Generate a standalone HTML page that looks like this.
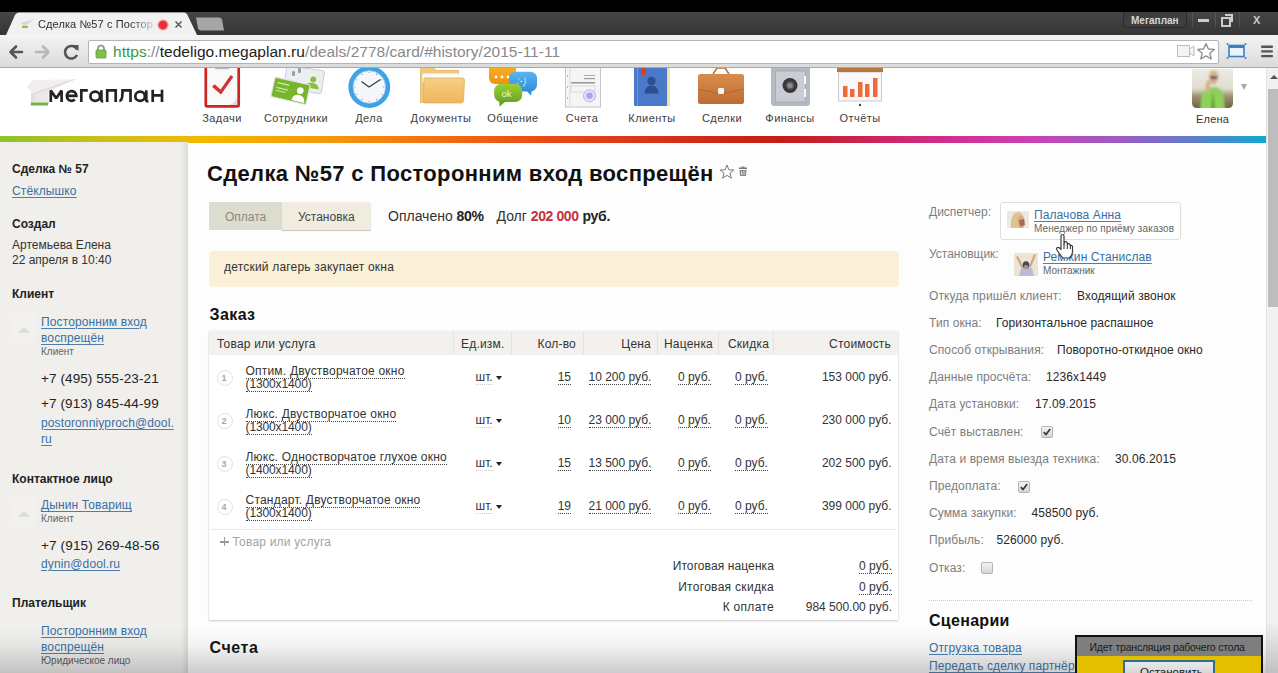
<!DOCTYPE html>
<html><head><meta charset="utf-8"><title>Megaplan</title>
<style>
html,body{margin:0;padding:0;width:1278px;height:673px;overflow:hidden;background:#fdfdfd;}
body{position:relative;font-family:"Liberation Sans",sans-serif;color:#333;}
.t{position:absolute;white-space:nowrap;line-height:1;}
.r{position:absolute;}
.a{letter-spacing:0.12px;color:#3870a4;text-decoration:underline;text-decoration-color:#4a7fb0;text-underline-offset:2px;}
.d{border-bottom:1px dotted #444;padding-bottom:0px;}
.g{color:#7d7d7d;}
.b{font-weight:bold;}
svg{position:absolute;overflow:visible;}
</style></head><body>
<div class="r" style="left:0px;top:0px;width:1278px;height:12px;background:#000"></div>
<div class="r" style="left:0px;top:12px;width:1278px;height:23px;background:linear-gradient(#464646,#353535)"></div>
<svg style="left:0;top:0" width="1278" height="68">
<path d="M6,35 L15,15 Q16.5,12.5 19,12.5 L184,12.5 Q186.5,12.5 187.5,15 L197,35 Z" fill="#f1f1f1"/>
<path d="M196,17.5 L219,17.5 Q221,17.5 222,19.5 L224,30.5 L201,30.5 Q199,30.5 198,28.5 Z" fill="#a6a6a6"/>
</svg>
<svg style="left:20px;top:18px" width="16" height="12">
<path d="M1,5 L14,1 L4,9 Z" fill="#d8d8d8"/><rect x="2" y="8" width="6" height="2" fill="#8cc63f"/></svg>
<div class="t " style="left:38px;top:18.5px;font-size:11px;color:#2f2f2f;letter-spacing:0.1px;-webkit-mask-image:linear-gradient(90deg,#000 80%,rgba(0,0,0,0.2));">Сделка №57 с Постор</div>
<div class="r" style="left:156.5px;top:18.5px;width:12px;height:12px;border-radius:50%;background:radial-gradient(circle,#e53038 0,#e53038 3.6px,#f27a7a 4.4px,#f7b5b5 5.4px,rgba(247,181,181,0) 6px)"></div>
<svg style="left:174px;top:20px" width="9" height="9"><path d="M1.5,1.5 L7.5,7.5 M7.5,1.5 L1.5,7.5" stroke="#5a5a5a" stroke-width="1.5"/></svg>
<div class="r" style="left:1123px;top:12px;width:62px;height:15px;background:#3e3e3e;border:1px solid #2b2b2b;border-top:none;border-radius:0 0 4px 4px"></div>
<div class="t " style="left:1131px;top:16px;font-size:10px;color:#d6d6d6;font-weight:bold">Мегаплан</div>
<div class="r" style="left:1192px;top:12px;width:1px;height:15px;background:#555"></div>
<div class="r" style="left:1198px;top:19px;width:11px;height:3px;background:#ccc"></div>
<div class="r" style="left:1215px;top:12px;width:1px;height:15px;background:#555"></div>
<div class="r" style="left:1221px;top:17px;width:6px;height:6px;border:2px solid #ccc"></div>
<div class="r" style="left:1225px;top:14px;width:6px;height:6px;border:2px solid #ccc;border-left:none;border-bottom:none"></div>
<div class="r" style="left:1239px;top:12px;width:1px;height:15px;background:#555"></div>
<div class="t " style="left:1253px;top:15px;font-size:11px;color:#ccc;font-weight:bold">X</div>
<div class="r" style="left:0px;top:35px;width:1278px;height:33px;background:linear-gradient(#f4f4f4,#dadada)"></div>
<div class="r" style="left:0px;top:67px;width:1278px;height:1px;background:#a8a8a8"></div>
<svg style="left:0;top:35px" width="90" height="32">
<path d="M22,17 L11,17 M16,11.5 L10.5,17 L16,22.5" stroke="#555" stroke-width="2.6" fill="none" stroke-linecap="round" stroke-linejoin="round"/>
<path d="M36,17 L48,17 M43,11.5 L48.5,17 L43,22.5" stroke="#b8b8b8" stroke-width="2.6" fill="none" stroke-linecap="round" stroke-linejoin="round"/>
<path d="M77,14.5 A6.3,6.3 0 1 0 77,20" stroke="#555" stroke-width="2.6" fill="none"/>
<path d="M72.5,10 L78.5,10 L78.5,16 Z" fill="#555"/>
</svg>
<div class="r" style="left:88px;top:39.5px;width:1129px;height:22.5px;background:#fff;border:1px solid #b4b4b4;border-radius:2px"></div>
<svg style="left:95px;top:44px" width="12" height="15">
<path d="M3,6 L3,4.5 A3,3 0 0 1 9,4.5 L9,6" stroke="#8a8a8a" stroke-width="1.6" fill="none"/>
<rect x="1" y="6" width="10" height="8" rx="1" fill="#7cc24a" stroke="#5d9a33" stroke-width="0.8"/></svg>
<div class="t " style="left:113px;top:43.5px;font-size:15.5px;letter-spacing:0.02px"><span style="color:#3a9a3a">https</span><span style="color:#888">://</span><span style="color:#222">tedeligo.megaplan.ru</span><span style="color:#888">/deals/2778/card/#history/2015-11-11</span></div>
<svg style="left:1170px;top:40px" width="108" height="24">
<rect x="7.5" y="5.5" width="12" height="11" fill="#f4f4f4" stroke="#bdbdbd" stroke-width="1"/>
<path d="M19.5,9 L24,6 L24,16 L19.5,13 Z" fill="#f4f4f4" stroke="#bdbdbd" stroke-width="1"/>
<path d="M36,3.5 L38.4,9 L44.3,9.4 L39.8,13.2 L41.2,19 L36,15.9 L30.8,19 L32.2,13.2 L27.7,9.4 L33.6,9 Z" fill="#fff" stroke="#8d8d8d" stroke-width="1.3" stroke-linejoin="round"/>
<rect x="59" y="5.5" width="15" height="11" fill="#eaf3fb" stroke="#3d7fc2" stroke-width="1.6"/>
<rect x="59" y="5" width="15" height="3" fill="#3d7fc2"/>
<circle cx="57.5" cy="4" r="1" fill="#3d7fc2"/><circle cx="75.5" cy="4" r="1" fill="#3d7fc2"/><circle cx="57.5" cy="18" r="1" fill="#3d7fc2"/><circle cx="75.5" cy="18" r="1" fill="#3d7fc2"/>
<rect x="91" y="5.5" width="12" height="2.4" rx="1" fill="#555"/><rect x="91" y="10.2" width="12" height="2.4" rx="1" fill="#555"/><rect x="91" y="14.9" width="12" height="2.4" rx="1" fill="#555"/>
</svg>
<div class="r" style="left:0px;top:68px;width:1266px;height:68px;background:#fff"></div>
<svg style="left:20px;top:72px" width="150" height="40">
<path d="M11,21 L54.8,7.3 L28.5,19.5 L28.5,30.5 L11,30.5 Z" fill="#ece8e8"/>
<path d="M11,21 L16,21 L14,30.5 L11,30.5 Z" fill="#e2dede"/>
<path d="M6.8,15.3 L13,7.9 L54.8,7.3 L14.1,21.5 Z" fill="#f2eeee"/>
<path d="M54.8,7.3 L14.1,21.5" stroke="#d6d2d2" stroke-width="0.9"/>
<path d="M11,30.5 L28.5,30.5 L28,33.5 L10.5,33.5 Z" fill="#72b44c"/>

</svg>
<svg style="left:0;top:0" width="170" height="110">
<g stroke="#232323" stroke-width="2.7" fill="none" stroke-linejoin="miter" stroke-miterlimit="1.6">
<path d="M50.8,102 L50.8,90.4 L56.2,98.2 L61.6,90.4 L61.6,102"/>
<path d="M66.8,95.8 L76.4,95.8 A4.8,4.9 0 1 0 74.8,99.6"/>
<path d="M81.3,102 L81.3,90.4 L87.8,90.4"/>
<ellipse cx="95.2" cy="96.2" rx="4.8" ry="4.6"/><path d="M101.4,90.2 L101.4,100 Q101.4,101.4 103.2,101.4"/>
<path d="M107.2,102 L107.2,90.4 L115.7,90.4 L115.7,102"/>
<path d="M119.3,101 Q122.4,100.6 122.5,93 L122.5,90.4 L130.5,90.4 L130.5,102"/>
<ellipse cx="140.1" cy="96.2" rx="4.8" ry="4.6"/><path d="M146.3,90.2 L146.3,100 Q146.3,101.4 148.4,101.4"/>
<path d="M152.7,89.8 L152.7,102 M152.7,95.3 L162,95.3 M162,89.8 L162,102"/>
</g></svg>
<svg style="left:0;top:68px;overflow:hidden" width="900" height="44">
<!-- zadachi -->
<rect x="206" y="-2" width="32" height="38" fill="#f9f9fa"/>
<rect x="215" y="0" width="14" height="1.2" fill="#b8b8b8"/>
<path d="M237.3,28 Q236,35.5 228,37.2 L237.3,37.2 Z" fill="#dcdcde"/>
<path d="M205.8,-2 L205.8,37 Q205.8,38.3 207.1,38.3 L237.4,38.3 Q238.7,38.3 238.7,37 L238.7,-2" stroke="#cf2424" stroke-width="2.7" fill="none"/>
<path d="M212,18.8 L214.6,16.2 L220.6,21.6 L230.7,7 L233.3,8.9 L221,26.4 Z" fill="#d63232"/>
<!-- sotrudniki -->
<g transform="rotate(9 304 12)">
<rect x="285" y="0" width="38" height="23" rx="2" fill="#eceef2" stroke="#c9cdd5" stroke-width="1"/>
<circle cx="313" cy="10" r="3" fill="#86c23a"/><path d="M306,19 Q307,13.5 313,13.5 Q319,13.5 320,19 Z" fill="#86c23a"/>
</g>
<rect x="292" y="3" width="3" height="5" rx="1" fill="#9a9ea6"/><rect x="298" y="0" width="3" height="5" rx="1" fill="#9a9ea6"/>
<g transform="rotate(13 290.5 22.8)">
<rect x="272.5" y="12.8" width="36" height="20" rx="1.5" fill="#78b52a" stroke="#dfe3e8" stroke-width="1.2"/>
<rect x="276" y="17" width="12" height="1.4" fill="#cfe8a8"/><rect x="276" y="22" width="12" height="1.4" fill="#cfe8a8"/><rect x="276" y="25" width="10" height="1.2" fill="#cfe8a8"/>
<circle cx="300" cy="20.5" r="3.3" fill="#fff"/><path d="M293.5,31.5 Q294,25 300,25 Q306,25 306.5,31.5 Z" fill="#fff"/>
</g>
<!-- dela clock -->
<circle cx="369.3" cy="19" r="18.6" fill="#f6f7fa" stroke="#3ea3e6" stroke-width="4.6"/><circle cx="369.3" cy="19" r="16.3" fill="none" stroke="#8cc8f0" stroke-width="0.8"/><circle cx="369.30" cy="33.50" r="0.6" fill="#888"/><circle cx="376.55" cy="31.56" r="0.6" fill="#888"/><circle cx="381.86" cy="26.25" r="0.6" fill="#888"/><circle cx="383.80" cy="19.00" r="0.6" fill="#888"/><circle cx="381.86" cy="11.75" r="0.6" fill="#888"/><circle cx="376.55" cy="6.44" r="0.6" fill="#888"/><circle cx="369.30" cy="4.50" r="0.6" fill="#888"/><circle cx="362.05" cy="6.44" r="0.6" fill="#888"/><circle cx="356.74" cy="11.75" r="0.6" fill="#888"/><circle cx="354.80" cy="19.00" r="0.6" fill="#888"/><circle cx="356.74" cy="26.25" r="0.6" fill="#888"/><circle cx="362.05" cy="31.56" r="0.6" fill="#888"/>
<path d="M361.5,13.5 L369,19 L380.5,11.5" stroke="#3a3a48" stroke-width="1.3" fill="none"/>
<!-- documenty folder -->
<defs>
<linearGradient id="fg1" x1="0" y1="0" x2="0" y2="1"><stop offset="0" stop-color="#f6cf86"/><stop offset="1" stop-color="#eeb55c"/></linearGradient>
<linearGradient id="gg1" x1="0" y1="0" x2="0" y2="1"><stop offset="0" stop-color="#9ccf34"/><stop offset="1" stop-color="#68a820"/></linearGradient>
<linearGradient id="og1" x1="0" y1="0" x2="0" y2="1"><stop offset="0" stop-color="#f8b52a"/><stop offset="1" stop-color="#ee9410"/></linearGradient>
<linearGradient id="bg1" x1="0" y1="0" x2="0" y2="1"><stop offset="0" stop-color="#5cb4f0"/><stop offset="1" stop-color="#2e8fdc"/></linearGradient>
</defs>
<path d="M420.5,-1 L433,-1 L436,2.5 L458.5,2.5 L458.5,34.5 L420.5,34.5 Z" fill="#f0c97c" stroke="#dcae5e" stroke-width="0.7"/>
<rect x="422.5" y="5.5" width="37" height="9" fill="#fafaf8"/>
<path d="M424,10 L462.5,10 Q464.5,10 464.5,12 L463.5,33 Q463.3,35 461.3,35 L425,35 Q423.5,35 423.5,33.5 Z" fill="url(#fg1)" stroke="#dcaa58" stroke-width="0.7"/>
<!-- obschenie bubbles -->
<rect x="489" y="-6" width="27" height="22" rx="6" fill="url(#og1)"/>
<circle cx="496" cy="9" r="1.4" fill="#fff"/><circle cx="502" cy="9" r="1.4" fill="#fff"/><circle cx="508" cy="9" r="1.4" fill="#fff"/>
<rect x="509" y="3.7" width="28" height="19.7" rx="6.5" fill="url(#bg1)"/>
<path d="M526,22 L531,27.8 L532,21 Z" fill="#2e8fdc"/>
<text x="517" y="16.5" font-size="10" fill="#cfeaff" font-family="Liberation Sans" transform="rotate(12 523 13)">:-)</text>
<rect x="494.2" y="15.7" width="28" height="18.3" rx="7" fill="url(#gg1)"/>
<path d="M499,32 L499.5,38.7 L506,33 Z" fill="#68a820"/>
<text x="501.5" y="28.5" font-size="9.5" fill="#eef8df" font-family="Liberation Sans">ok</text>
<!-- scheta invoice -->
<rect x="565.5" y="-3" width="35" height="42" fill="#f5f5f8" stroke="#c4c6cc" stroke-width="1"/>
<rect x="569.5" y="-3" width="0.8" height="42" fill="#d4d4da"/>
<rect x="567" y="7" width="0.8" height="2" fill="#aaa"/><rect x="567" y="18" width="0.8" height="2" fill="#aaa"/><rect x="567" y="29" width="0.8" height="2" fill="#aaa"/>
<rect x="584" y="7" width="11" height="1" fill="#a8a8a8"/><rect x="584" y="10" width="11" height="1.2" fill="#999"/>
<rect x="571" y="14.3" width="24" height="1.1" fill="#707070"/>
<rect x="571" y="18" width="24" height="6" fill="none" stroke="#cfcfd4" stroke-width="0.7"/>
<circle cx="589.5" cy="27.8" r="6" fill="#e8e0f8" stroke="#b9a2ea" stroke-width="0.9"/><circle cx="589.5" cy="27.8" r="3.3" fill="#b79cf0"/>
<!-- klienty notebook -->
<rect x="634" y="-3" width="34" height="41" rx="1" fill="#4b79c9"/>
<rect x="667" y="-3" width="3" height="41" fill="#f2e2a0"/>
<rect x="637" y="-3" width="1" height="41" fill="#6d95da"/>
<rect x="641" y="-2" width="5" height="9" fill="#e03c2a"/>
<circle cx="651.5" cy="13" r="4.2" fill="#2c4f8e"/>
<path d="M644.5,25.5 Q645,17.5 651.5,17.5 Q658,17.5 658.5,25.5 Z" fill="#2c4f8e"/>
<!-- sdelki briefcase -->
<path d="M713,6 L717,0 L725,0 L729,6" stroke="#b8743e" stroke-width="1.6" fill="none"/>
<defs><linearGradient id="bc1" x1="0" y1="0" x2="0" y2="1"><stop offset="0" stop-color="#d98c4c"/><stop offset="1" stop-color="#bf6c34"/></linearGradient></defs><rect x="698" y="6" width="46" height="30" rx="2.5" fill="url(#bc1)"/>
<path d="M698,21 L721,26 L744,21" stroke="#a86230" stroke-width="0.8" fill="none"/>
<rect x="718" y="20" width="6" height="6" rx="1" fill="#f4f4f4"/>
<!-- finansy safe -->
<rect x="771" y="-3" width="39" height="41" rx="3" fill="#b5b9c1"/>
<rect x="775.5" y="3" width="30" height="31" fill="#c9cdd3" stroke="#a4a8b0" stroke-width="0.8"/>
<rect x="804" y="8" width="2" height="8" fill="#f6f6f6"/><rect x="804" y="21" width="2" height="8" fill="#f6f6f6"/>
<circle cx="790" cy="17.5" r="7.5" fill="#38383a"/><circle cx="790" cy="17.5" r="4.2" fill="#5a5a5c"/><circle cx="790" cy="17.5" r="2.6" fill="#8a8a8c"/>
<!-- otchety board -->
<rect x="838.5" y="4" width="43" height="29" fill="#fbf9fb" stroke="#c8c8cc" stroke-width="1"/>
<rect x="837" y="-1" width="46" height="5" fill="#b9773e"/>
<rect x="843" y="18" width="4.5" height="11" fill="#f26a36"/>
<rect x="850" y="21" width="4.5" height="8" fill="#f26a36"/>
<rect x="858" y="14" width="4.5" height="15" fill="#f26a36"/>
<rect x="865" y="16" width="4.5" height="13" fill="#f26a36"/>
<rect x="873" y="10" width="4.5" height="19" fill="#f26a36"/>
<circle cx="860" cy="37" r="1.2" fill="#444"/>
</svg>
<div class="t" style="left:172px;width:100px;text-align:center;top:113px;font-size:11px;color:#404040;letter-spacing:0.45px">Задачи</div>
<div class="t" style="left:246px;width:100px;text-align:center;top:113px;font-size:11px;color:#404040;letter-spacing:0.45px">Сотрудники</div>
<div class="t" style="left:319px;width:100px;text-align:center;top:113px;font-size:11px;color:#404040;letter-spacing:0.45px">Дела</div>
<div class="t" style="left:391px;width:100px;text-align:center;top:113px;font-size:11px;color:#404040;letter-spacing:0.45px">Документы</div>
<div class="t" style="left:463px;width:100px;text-align:center;top:113px;font-size:11px;color:#404040;letter-spacing:0.45px">Общение</div>
<div class="t" style="left:532px;width:100px;text-align:center;top:113px;font-size:11px;color:#404040;letter-spacing:0.45px">Счета</div>
<div class="t" style="left:602px;width:100px;text-align:center;top:113px;font-size:11px;color:#404040;letter-spacing:0.45px">Клиенты</div>
<div class="t" style="left:672px;width:100px;text-align:center;top:113px;font-size:11px;color:#404040;letter-spacing:0.45px">Сделки</div>
<div class="t" style="left:740px;width:100px;text-align:center;top:113px;font-size:11px;color:#404040;letter-spacing:0.45px">Финансы</div>
<div class="t" style="left:810px;width:100px;text-align:center;top:113px;font-size:11px;color:#404040;letter-spacing:0.45px">Отчёты</div>
<svg style="left:1192px;top:69px" width="42" height="40">
<defs><clipPath id="av"><path d="M0,0 L41,0 L41,34 Q41,39 36,39 L5,39 Q0,39 0,34 Z"/></clipPath>
<filter id="bl3"><feGaussianBlur stdDeviation="0.8"/></filter>
<linearGradient id="sky" x1="0" y1="0" x2="0" y2="1"><stop offset="0" stop-color="#ecebe6"/><stop offset="0.5" stop-color="#e0dccd"/><stop offset="0.65" stop-color="#a09370"/><stop offset="1" stop-color="#62583f"/></linearGradient></defs>
<g clip-path="url(#av)"><g filter="url(#bl3)">
<rect x="-2" y="-2" width="46" height="44" fill="url(#sky)"/>
<path d="M8,42 L10,24 Q14,18 21,18 Q28,18 31,23 L33,42 Z" fill="#8fd05a"/>
<path d="M19,42 L21,22 L23,42 Z" fill="#5a9a38"/>
<path d="M14,23 Q13,15 15.5,11 L18.5,12.5 L17.5,24 Z" fill="#d6b08a"/>
<ellipse cx="21.5" cy="9.5" rx="4" ry="5.5" fill="#d4ac88"/>
<path d="M17,9 Q16.5,1.5 21.5,1.5 Q27,1.5 26.5,9 L25,5 Q21.5,3 18.5,5 Z" fill="#cdb070"/>
<rect x="18" y="7.5" width="7.5" height="2.2" fill="#3a3430"/>
</g></g></svg>
<div class="r" style="left:1241px;top:84px;width:0;height:0;border-left:3.5px solid transparent;border-right:3.5px solid transparent;border-top:6px solid #a8a8a8"></div>
<div class="t " style="left:1196px;top:114px;font-size:11px;color:#333;letter-spacing:0.2px">Елена</div>
<div class="r" style="left:0px;top:136px;width:1266px;height:6.5px;background:linear-gradient(90deg,#8cc22a 0px,#c8c018 100px,#f4b800 200px,#f49a0c 320px,#f47c10 400px,#ee5014 520px,#d83418 650px,#c21e14 780px,#cc2250 860px,#d22e90 950px,#cc40b4 1030px,#9a5cc4 1120px,#5a80cc 1200px,#10a8d0 1266px)"></div>
<div class="r" style="left:1266px;top:68px;width:12px;height:605px;background:#f0f0f0;border-left:1px solid #e4e4e4"></div>
<div class="r" style="left:1270px;top:75px;width:0;height:0;border-left:4px solid transparent;border-right:4px solid transparent;border-bottom:4px solid #505050"></div>
<div class="r" style="left:1268px;top:89px;width:10px;height:218px;background:#bdbdbd"></div>
<div class="r" style="left:0px;top:142px;width:188px;height:531px;background:#f0efec;box-shadow:inset -6px 0 6px -4px #d2d0cb"></div>
<div class="r" style="left:187px;top:142px;width:1px;height:531px;background:#dedcd8"></div>
<div class="t " style="left:12px;top:163px;font-size:12px;color:#222;font-weight:bold">Сделка № 57</div>
<div class="t a" style="left:12px;top:185px;font-size:12px;">Стёклышко</div>
<div class="t " style="left:12px;top:218px;font-size:12px;color:#222;font-weight:bold">Создал</div>
<div class="t " style="left:12px;top:239px;font-size:12px;color:#333">Артемьева Елена</div>
<div class="t " style="left:12px;top:253.5px;font-size:12px;color:#333">22 апреля в 10:40</div>
<div class="t " style="left:12px;top:288px;font-size:12px;color:#222;font-weight:bold">Клиент</div>
<div class="r" style="left:10px;top:313px;width:25px;height:29px;background:#f2f1ee"></div>
<div class="r" style="left:18px;top:327px;width:0;height:0;border-left:6.5px solid transparent;border-right:6.5px solid transparent;border-bottom:6px solid #dedede"></div>
<div class="t a" style="left:41px;top:315.5px;font-size:12px;">Посторонним вход</div>
<div class="t a" style="left:41px;top:332px;font-size:12px;">воспрещён</div>
<div class="t " style="left:41px;top:347px;font-size:10px;color:#666">Клиент</div>
<div class="t " style="left:41px;top:371.5px;font-size:13.5px;color:#222;letter-spacing:0.1px">+7 (495) 555-23-21</div>
<div class="t " style="left:41px;top:397px;font-size:13.5px;color:#222;letter-spacing:0.1px">+7 (913) 845-44-99</div>
<div class="t a" style="left:41px;top:416.5px;font-size:12px;">postoronniyproch@dool.</div>
<div class="t a" style="left:41px;top:433px;font-size:12px;">ru</div>
<div class="t " style="left:12px;top:472.5px;font-size:12px;color:#222;font-weight:bold">Контактное лицо</div>
<div class="r" style="left:10px;top:497px;width:25px;height:29px;background:#f2f1ee"></div>
<div class="r" style="left:18px;top:511px;width:0;height:0;border-left:6.5px solid transparent;border-right:6.5px solid transparent;border-bottom:6px solid #dedede"></div>
<div class="t a" style="left:41px;top:499px;font-size:12px;">Дынин Товарищ</div>
<div class="t " style="left:41px;top:514px;font-size:10px;color:#666">Клиент</div>
<div class="t " style="left:41px;top:538.5px;font-size:13.5px;color:#222;letter-spacing:0.15px">+7 (915) 269-48-56</div>
<div class="t a" style="left:41px;top:557.5px;font-size:12px;">dynin@dool.ru</div>
<div class="t " style="left:12px;top:596.5px;font-size:12px;color:#222;font-weight:bold">Плательщик</div>
<div class="t a" style="left:41px;top:624.5px;font-size:12px;">Посторонним вход</div>
<div class="t a" style="left:41px;top:641px;font-size:12px;">воспрещён</div>
<div class="t " style="left:41px;top:655.5px;font-size:10px;color:#555">Юридическое лицо</div>
<div class="t " style="left:207px;top:162.5px;font-size:22px;color:#111;font-weight:bold;letter-spacing:0.34px">Сделка №57 с Посторонним вход воспрещён</div>
<svg style="left:719px;top:164px" width="30" height="16">
<path d="M8,1 L9.9,5.8 L14.8,6 L11,9.2 L12.3,14.2 L8,11.4 L3.7,14.2 L5,9.2 L1.2,6 L6.1,5.8 Z" fill="#fff" stroke="#777" stroke-width="1" stroke-linejoin="round"/>
<rect x="20" y="3.5" width="8" height="1.5" fill="#777"/><rect x="22.5" y="2.5" width="3" height="1.2" fill="#777"/>
<path d="M20.5,6 L27.5,6 L27,12 L21,12 Z" fill="#888"/>
<rect x="22.3" y="7" width="0.8" height="4" fill="#fff"/><rect x="24.6" y="7" width="0.8" height="4" fill="#fff"/>
</svg>
<div class="r" style="left:209px;top:202px;width:73px;height:28px;background:#dcdccf"></div>
<div class="r" style="left:282px;top:202px;width:89px;height:28px;background:#f1ece0;box-shadow:0 1px 1px #c9c5b8;border-radius:0 2px 2px 0"></div>
<div class="t " style="left:225px;top:210.5px;font-size:12px;color:#8a8a84">Оплата</div>
<div class="t " style="left:298px;top:210.5px;font-size:12px;color:#444">Установка</div>
<div class="t " style="left:388px;top:209px;font-size:14px;color:#333">Оплачено <b style="color:#222;letter-spacing:-0.4px">80%</b></div>
<div class="t " style="left:496.5px;top:209px;font-size:14px;color:#333">Долг <b style="color:#c4313c;letter-spacing:-0.4px">202 000</b> <b style="color:#222;letter-spacing:-0.3px">руб.</b></div>
<div class="r" style="left:209px;top:251px;width:690px;height:36px;background:#faf0d7;border-radius:4px"></div>
<div class="t " style="left:224px;top:261px;font-size:12px;color:#333;letter-spacing:0.2px">детский лагерь закупает окна</div>
<div class="t " style="left:209.5px;top:306.5px;font-size:16px;color:#111;font-weight:bold;letter-spacing:0.4px">Заказ</div>
<div class="r" style="left:209px;top:331px;width:689px;height:289px;background:#fff;box-shadow:0 1px 2px rgba(0,0,0,0.18), 0 0 1px rgba(0,0,0,0.12)"></div>
<div class="r" style="left:209px;top:331px;width:689px;height:24px;background:#f2f1ed"></div>
<div class="r" style="left:453px;top:331px;width:1px;height:24px;background:#e4e3dc"></div>
<div class="r" style="left:511px;top:331px;width:1px;height:24px;background:#e4e3dc"></div>
<div class="r" style="left:583px;top:331px;width:1px;height:24px;background:#e4e3dc"></div>
<div class="r" style="left:657px;top:331px;width:1px;height:24px;background:#e4e3dc"></div>
<div class="r" style="left:718px;top:331px;width:1px;height:24px;background:#e4e3dc"></div>
<div class="r" style="left:773px;top:331px;width:1px;height:24px;background:#e4e3dc"></div>
<div class="t " style="left:217px;top:337.5px;font-size:12px;color:#333;letter-spacing:0.2px">Товар или услуга</div>
<div class="t " style="left:461px;top:337.5px;font-size:12px;color:#333;letter-spacing:0.2px">Ед.изм.</div>
<div class="t " style="right:702px;top:337.5px;font-size:12px;color:#333;letter-spacing:0.2px">Кол-во</div>
<div class="t " style="right:627px;top:337.5px;font-size:12px;color:#333;letter-spacing:0.2px">Цена</div>
<div class="t " style="left:664px;top:337.5px;font-size:12px;color:#333;letter-spacing:0.2px">Наценка</div>
<div class="t " style="left:728px;top:337.5px;font-size:12px;color:#333;letter-spacing:0.2px">Скидка</div>
<div class="t " style="right:387px;top:337.5px;font-size:12px;color:#333;letter-spacing:0.2px">Стоимость</div>
<div class="r" style="left:217px;top:369.5px;width:14px;height:14px;border:1px solid #e2e2e2;border-radius:50%;background:#fff"></div>
<div class="t " style="left:221.5px;top:374.0px;font-size:9px;color:#a8a8a8;font-weight:bold">1</div>
<div class="t " style="left:245.5px;top:364.5px;font-size:12px;color:#333;letter-spacing:0.21px"><span class="d">Оптим. Двустворчатое окно</span></div>
<div class="t " style="left:245.5px;top:378.0px;font-size:12px;color:#333;letter-spacing:-0.12px"><span class="d">(1300x1400)</span></div>
<div class="t " style="left:475.5px;top:371.0px;font-size:12px;color:#333"><span class="d" style="border-color:#ccc">шт.</span></div>
<div class="r" style="left:496px;top:376.0px;width:0;height:0;border-left:3.5px solid transparent;border-right:3.5px solid transparent;border-top:4px solid #222"></div>
<div class="t " style="right:707px;top:371.0px;font-size:12px;color:#333"><span class="d">15</span></div>
<div class="t " style="left:588.5px;top:371.0px;font-size:12px;color:#333"><span class="d">10 200 руб.</span></div>
<div class="t " style="left:678px;top:371.0px;font-size:12px;color:#333"><span class="d">0 руб.</span></div>
<div class="t " style="left:735px;top:371.0px;font-size:12px;color:#333"><span class="d">0 руб.</span></div>
<div class="t " style="right:386.5px;top:371.0px;font-size:12px;color:#333">153 000 руб.</div>
<div class="r" style="left:217px;top:412.5px;width:14px;height:14px;border:1px solid #e2e2e2;border-radius:50%;background:#fff"></div>
<div class="t " style="left:221.5px;top:417.0px;font-size:9px;color:#a8a8a8;font-weight:bold">2</div>
<div class="t " style="left:245.5px;top:407.5px;font-size:12px;color:#333;letter-spacing:0.21px"><span class="d">Люкс. Двустворчатое окно</span></div>
<div class="t " style="left:245.5px;top:421.0px;font-size:12px;color:#333;letter-spacing:-0.12px"><span class="d">(1300x1400)</span></div>
<div class="t " style="left:475.5px;top:414.0px;font-size:12px;color:#333"><span class="d" style="border-color:#ccc">шт.</span></div>
<div class="r" style="left:496px;top:419.0px;width:0;height:0;border-left:3.5px solid transparent;border-right:3.5px solid transparent;border-top:4px solid #222"></div>
<div class="t " style="right:707px;top:414.0px;font-size:12px;color:#333"><span class="d">10</span></div>
<div class="t " style="left:588.5px;top:414.0px;font-size:12px;color:#333"><span class="d">23 000 руб.</span></div>
<div class="t " style="left:678px;top:414.0px;font-size:12px;color:#333"><span class="d">0 руб.</span></div>
<div class="t " style="left:735px;top:414.0px;font-size:12px;color:#333"><span class="d">0 руб.</span></div>
<div class="t " style="right:386.5px;top:414.0px;font-size:12px;color:#333">230 000 руб.</div>
<div class="r" style="left:217px;top:455.5px;width:14px;height:14px;border:1px solid #e2e2e2;border-radius:50%;background:#fff"></div>
<div class="t " style="left:221.5px;top:460.0px;font-size:9px;color:#a8a8a8;font-weight:bold">3</div>
<div class="t " style="left:245.5px;top:450.5px;font-size:12px;color:#333;letter-spacing:0.21px"><span class="d">Люкс. Одностворчатое глухое окно</span></div>
<div class="t " style="left:245.5px;top:464.0px;font-size:12px;color:#333;letter-spacing:-0.12px"><span class="d">(1400x1400)</span></div>
<div class="t " style="left:475.5px;top:457.0px;font-size:12px;color:#333"><span class="d" style="border-color:#ccc">шт.</span></div>
<div class="r" style="left:496px;top:462.0px;width:0;height:0;border-left:3.5px solid transparent;border-right:3.5px solid transparent;border-top:4px solid #222"></div>
<div class="t " style="right:707px;top:457.0px;font-size:12px;color:#333"><span class="d">15</span></div>
<div class="t " style="left:588.5px;top:457.0px;font-size:12px;color:#333"><span class="d">13 500 руб.</span></div>
<div class="t " style="left:678px;top:457.0px;font-size:12px;color:#333"><span class="d">0 руб.</span></div>
<div class="t " style="left:735px;top:457.0px;font-size:12px;color:#333"><span class="d">0 руб.</span></div>
<div class="t " style="right:386.5px;top:457.0px;font-size:12px;color:#333">202 500 руб.</div>
<div class="r" style="left:217px;top:498.5px;width:14px;height:14px;border:1px solid #e2e2e2;border-radius:50%;background:#fff"></div>
<div class="t " style="left:221.5px;top:503.0px;font-size:9px;color:#a8a8a8;font-weight:bold">4</div>
<div class="t " style="left:245.5px;top:493.5px;font-size:12px;color:#333;letter-spacing:0.21px"><span class="d">Стандарт. Двустворчатое окно</span></div>
<div class="t " style="left:245.5px;top:507.0px;font-size:12px;color:#333;letter-spacing:-0.12px"><span class="d">(1300x1400)</span></div>
<div class="t " style="left:475.5px;top:500.0px;font-size:12px;color:#333"><span class="d" style="border-color:#ccc">шт.</span></div>
<div class="r" style="left:496px;top:505.0px;width:0;height:0;border-left:3.5px solid transparent;border-right:3.5px solid transparent;border-top:4px solid #222"></div>
<div class="t " style="right:707px;top:500.0px;font-size:12px;color:#333"><span class="d">19</span></div>
<div class="t " style="left:588.5px;top:500.0px;font-size:12px;color:#333"><span class="d">21 000 руб.</span></div>
<div class="t " style="left:678px;top:500.0px;font-size:12px;color:#333"><span class="d">0 руб.</span></div>
<div class="t " style="left:735px;top:500.0px;font-size:12px;color:#333"><span class="d">0 руб.</span></div>
<div class="t " style="right:386.5px;top:500.0px;font-size:12px;color:#333">399 000 руб.</div>
<div class="r" style="left:210px;top:529px;width:687px;height:1px;background:#ececec"></div>
<div class="r" style="left:220px;top:541px;width:9px;height:1.5px;background:#999"></div>
<div class="r" style="left:223.8px;top:537px;width:1.5px;height:9px;background:#999"></div>
<div class="t " style="left:232.5px;top:536px;font-size:12px;color:#a3a3a3;letter-spacing:0.2px">Товар или услуга</div>
<div class="t " style="right:504px;top:560px;font-size:12px;color:#333;letter-spacing:0.1px">Итоговая наценка</div>
<div class="t " style="right:386px;top:560px;font-size:12px;color:#333"><span class="d">0 руб.</span></div>
<div class="t " style="right:504px;top:580.5px;font-size:12px;color:#333;letter-spacing:0.3px">Итоговая скидка</div>
<div class="t " style="right:386px;top:580.5px;font-size:12px;color:#333"><span class="d">0 руб.</span></div>
<div class="t " style="right:504px;top:601px;font-size:12px;color:#333;letter-spacing:0.3px">К оплате</div>
<div class="t " style="right:386px;top:601px;font-size:12px;color:#333">984 500.00 руб.</div>
<div class="t " style="left:209.5px;top:640px;font-size:16px;color:#111;font-weight:bold;letter-spacing:0.6px">Счета</div>
<div class="t " style="left:929px;top:206px;font-size:12px;color:#7d7d7d">Диспетчер:</div>
<div class="r" style="left:1000px;top:202px;width:179px;height:36px;background:#fff;border:1px solid #dedede;border-radius:3px"></div>
<svg style="left:1007px;top:210.5px" width="22" height="17">
<defs><filter id="bl1"><feGaussianBlur stdDeviation="0.7"/></filter></defs>
<rect width="22" height="17" fill="#ebe8e6"/>
<g filter="url(#bl1)">
<path d="M4,17 Q3,6 8,2 Q13,-1 16,4 Q18,10 17,17 Z" fill="#dfc28c"/>
<ellipse cx="14" cy="10" rx="3.5" ry="5" fill="#d9a98e"/>
<path d="M12,9 L17,8 L18,14 L13,16 Z" fill="#a86a58"/>
</g></svg>
<div class="t a" style="left:1034px;top:208.5px;font-size:12px;letter-spacing:0.1px">Палачова Анна</div>
<div class="t " style="left:1034px;top:224px;font-size:10px;color:#666;letter-spacing:0.1px">Менеджер по приёму заказов</div>
<div class="t " style="left:929px;top:248px;font-size:12px;color:#7d7d7d">Установщик:</div>
<svg style="left:1014px;top:253px" width="24" height="23">
<defs><filter id="bl2"><feGaussianBlur stdDeviation="0.6"/></filter></defs>
<rect width="24" height="23" fill="#efe4d2"/>
<g filter="url(#bl2)">
<path d="M2,4 L4,3 L9,13 L8,16 Z" fill="#c8a890"/>
<path d="M20,1 L22,2 L17,14 L15,13 Z" fill="#c8a890"/>
<path d="M5,23 L7,15 Q12,12 18,15 L20,23 Z" fill="#b9bcd6"/>
<ellipse cx="12" cy="12" rx="3.3" ry="3.8" fill="#4a4650"/>
<ellipse cx="12" cy="14" rx="2.3" ry="2" fill="#b89080"/>
</g></svg>
<div class="t a" style="left:1043px;top:250.5px;font-size:12px;letter-spacing:0.1px">Ремжин Станислав</div>
<div class="t " style="left:1043px;top:265.5px;font-size:10px;color:#666">Монтажник</div>
<svg style="left:1055px;top:234px" width="20" height="26">
<path d="M6,2 Q6,0.5 7.5,0.5 Q9,0.5 9,2 L9,10 L9.5,8 Q11,7 12,8.5 L12.5,10 Q14,9 15,10.5 L15.5,11.5 Q17,11 17.5,12.5 L17.5,18 Q17,22 14,24 L8,24 Q5,21 2,16 Q1,14 2.5,13.5 Q4,13 6,15.5 Z" fill="#fff" stroke="#3a3a3a" stroke-width="1.2" stroke-linejoin="round"/>
<path d="M9,10 L9,15 M12.3,10 L12.3,15 M15.3,11.5 L15.3,15" stroke="#111" stroke-width="0.9"/>
</svg>
<div class="t " style="left:929px;top:290px;font-size:12px;color:#7d7d7d;letter-spacing:0.1px">Откуда пришёл клиент:</div>
<div class="t " style="left:1077px;top:290px;font-size:12px;color:#2a2a2a;letter-spacing:0.1px">Входящий звонок</div>
<div class="t " style="left:929px;top:317px;font-size:12px;color:#7d7d7d;letter-spacing:0.1px">Тип окна:</div>
<div class="t " style="left:996px;top:317px;font-size:12px;color:#2a2a2a;letter-spacing:0.1px">Горизонтальное распашное</div>
<div class="t " style="left:929px;top:344px;font-size:12px;color:#7d7d7d;letter-spacing:0.1px">Способ открывания:</div>
<div class="t " style="left:1057px;top:344px;font-size:12px;color:#2a2a2a;letter-spacing:0.1px">Поворотно-откидное окно</div>
<div class="t " style="left:929px;top:371px;font-size:12px;color:#7d7d7d;letter-spacing:0.1px">Данные просчёта:</div>
<div class="t " style="left:1046px;top:371px;font-size:12px;color:#2a2a2a;letter-spacing:0.1px">1236x1449</div>
<div class="t " style="left:929px;top:398px;font-size:12px;color:#7d7d7d;letter-spacing:0.1px">Дата установки:</div>
<div class="t " style="left:1035px;top:398px;font-size:12px;color:#2a2a2a;letter-spacing:0.1px">17.09.2015</div>
<div class="t " style="left:929px;top:426px;font-size:12px;color:#7d7d7d;letter-spacing:0.1px">Счёт выставлен:</div>
<div class="t " style="left:929px;top:453px;font-size:12px;color:#7d7d7d;letter-spacing:0.1px">Дата и время выезда техника:</div>
<div class="t " style="left:1115px;top:453px;font-size:12px;color:#2a2a2a;letter-spacing:0.1px">30.06.2015</div>
<div class="t " style="left:929px;top:480px;font-size:12px;color:#7d7d7d;letter-spacing:0.1px">Предоплата:</div>
<div class="t " style="left:929px;top:507px;font-size:12px;color:#7d7d7d;letter-spacing:0.1px">Сумма закупки:</div>
<div class="t " style="left:1031.5px;top:507px;font-size:12px;color:#2a2a2a;letter-spacing:0.1px">458500 руб.</div>
<div class="t " style="left:929px;top:534px;font-size:12px;color:#7d7d7d;letter-spacing:0.1px">Прибыль:</div>
<div class="t " style="left:996.5px;top:534px;font-size:12px;color:#2a2a2a;letter-spacing:0.1px">526000 руб.</div>
<div class="t " style="left:929px;top:561.5px;font-size:12px;color:#7d7d7d;letter-spacing:0.1px">Отказ:</div>
<div class="r" style="left:1041px;top:426px;width:10px;height:10px;border:1px solid #b4b4b4;border-radius:2px;background:linear-gradient(#f4f4f4,#d6d6d6)"></div>
<svg style="left:1043px;top:428px" width="8" height="8"><path d="M0.8,4.2 L3,6.5 L7.2,1" stroke="#333" stroke-width="1.7" fill="none"/></svg>
<div class="r" style="left:1017.5px;top:480.5px;width:10px;height:10px;border:1px solid #b4b4b4;border-radius:2px;background:linear-gradient(#f4f4f4,#d6d6d6)"></div>
<svg style="left:1019.5px;top:482.5px" width="8" height="8"><path d="M0.8,4.2 L3,6.5 L7.2,1" stroke="#333" stroke-width="1.7" fill="none"/></svg>
<div class="r" style="left:981px;top:561.5px;width:10px;height:10px;border:1px solid #b4b4b4;border-radius:2px;background:linear-gradient(#f4f4f4,#d6d6d6)"></div>
<div class="r" style="left:929px;top:600px;width:323px;height:0;border-top:1px dotted #c8c8c8"></div>
<div class="t " style="left:929px;top:612.5px;font-size:16px;color:#111;font-weight:bold;letter-spacing:0.3px">Сценарии</div>
<div class="t a" style="left:929px;top:641.5px;font-size:12px;">Отгрузка товара</div>
<div class="t a" style="left:929px;top:660px;font-size:12px;">Передать сделку партнёру</div>
<div class="r" style="left:0px;top:626px;width:1266px;height:47px;background:linear-gradient(rgba(60,60,70,0) 0%,rgba(60,60,70,0.05) 40%,rgba(60,60,70,0.25) 100%)"></div>
<div class="r" style="left:1266px;top:622px;width:12px;height:51px;background:linear-gradient(rgba(60,60,70,0) 0%,rgba(60,60,70,0.26) 100%)"></div>
<div class="r" style="left:1075px;top:635px;width:188px;height:38px;background:#e4bf00;border:2px solid #111;border-bottom:none;box-sizing:border-box"></div>
<div class="r" style="left:1077px;top:637px;width:184px;height:19px;background:#7e7e7e"></div>
<div class="t " style="left:1089.5px;top:642px;font-size:10.5px;color:#1a1a1a;letter-spacing:-0.2px">Идет трансляция рабочего стола</div>
<div class="r" style="left:1123px;top:660px;width:92px;height:13px;background:linear-gradient(#eaeaea,#d6d6d6);border:2px solid #2e6f8e;border-bottom:none;box-sizing:border-box"></div>
<div class="t " style="left:1140px;top:667.0px;font-size:11.5px;color:#1a1a1a">Остановить</div>
</body></html>
